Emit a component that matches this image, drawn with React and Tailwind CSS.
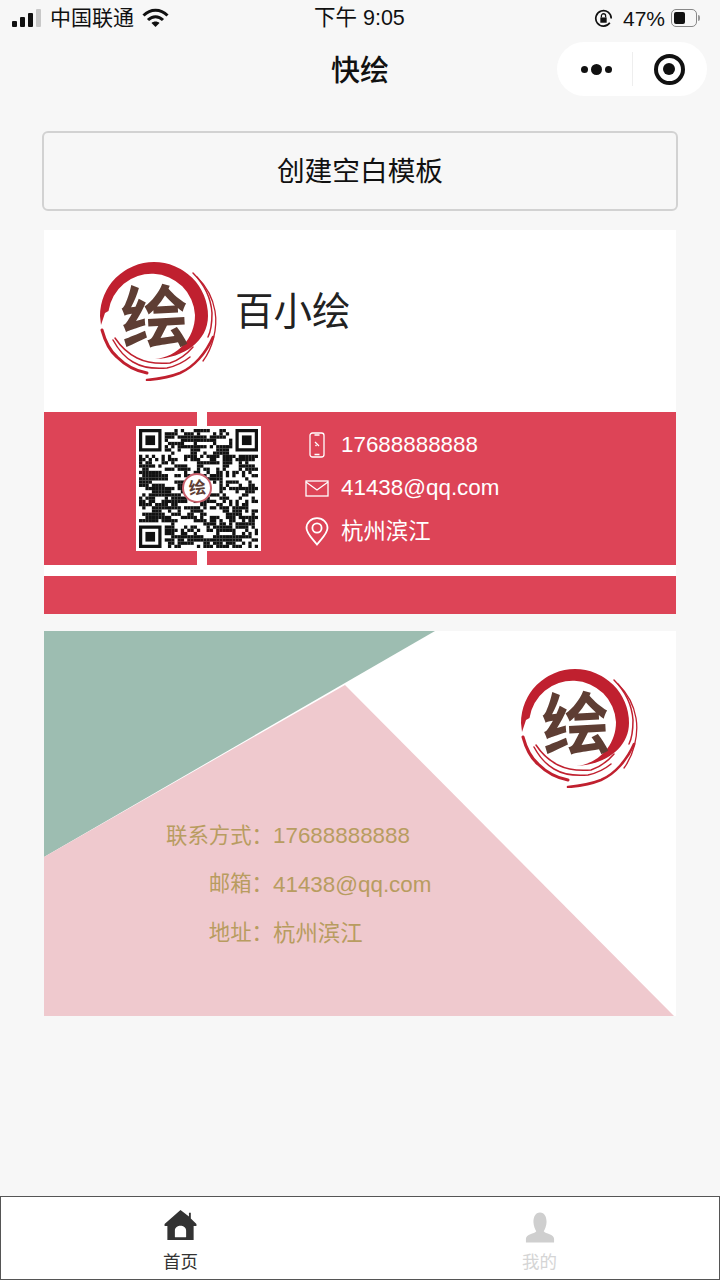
const FONT = "font-['Liberation_Sans','Noto_Sans_CJK_SC',sans-serif]";

// the logo: ink brush ring with the character on top
function Logo() {
    return (
        <div className="relative w-[120px] h-[120px] shrink-0">
            <svg viewBox="0 0 120 120" className="w-full h-full" fill="none" stroke="#c0202f" strokeLinecap="round">
                <path stroke="none" fill="#c0202f" d="M2 64 L1 55 A54 54 0 0 1 109 55 C109 80 85 97 56 98 C78 96 96 78 96 54 A43.5 43.5 0 0 0 9.5 50 L6 52 Z" />
                <path strokeWidth="1.3" d="M98 16 C108 26 114 38 116 50 C119 68 113 88 104 100" />
                <path strokeWidth="1.5" d="M94 12 C106 24 112 38 113 52 C113 62 112 70 109 76" />
                <path strokeWidth="3" d="M3 69 C6 80 11 90 18 96 C27 105 37 110 48 112" />
                <path strokeWidth="1.5" d="M14 79 C20 90 27 97 34 101 C44 107 57 108 68 107 C77 105 85 101 91 96" />
                <path strokeWidth="1.5" d="M16 77 C22 86 30 93 38 97 C48 102 60 103 71 102 C80 99 88 93 94 86" />
                <path strokeWidth="2.6" d="M48 119 C60 118 71 116 81 112 C95 106 107 92 114 76" />
            </svg>
            <span className={`${FONT} absolute inset-0 flex items-center justify-center pr-[8px] pb-[6px] text-[68px] font-bold text-[#5e3d33] leading-none -rotate-3`}>绘</span>
        </div>
    );
}

function QrCode() {
    const size = 37;
    const cells = [];
    let seed = 20240905;
    const next = () => {
        seed = (seed * 1103515245 + 12345) & 0x7fffffff;
        return (seed >> 16) % 100;
    };
    const inFinder = (x, y) => (x < 8 && y < 8) || (x >= size - 8 && y < 8) || (x < 8 && y >= size - 8);
    for (let y = 0; y < size; y++) {
        let prev = false;
        for (let x = 0; x < size; x++) {
            // neighbours lean the same way, so the modules clump like the real code
            const on = next() < (prev ? 66 : 44);
            prev = on;
            if (on && !inFinder(x, y)) {
                cells.push(<rect key={`${x}-${y}`} x={x} y={y} width="1.02" height="1.02" />);
            }
        }
    }
    const finders = [[0, 0], [size - 7, 0], [0, size - 7]];
    return (
        <div className="relative w-[125px] h-[125px] bg-white p-[3px] shrink-0">
            <svg viewBox="0 0 37 37" className="w-full h-full" fill="#111">
                {cells}
                {finders.map(([x, y]) => (
                    <g key={`${x}-${y}`}>
                        <path fillRule="evenodd" d={`M${x} ${y}h7v7h-7z M${x + 1} ${y + 1}v5h5v-5z`} />
                        <rect x={x + 2} y={y + 2} width="3" height="3" />
                    </g>
                ))}
            </svg>
            <div className="absolute left-[46px] top-[47px] w-[30px] h-[30px] rounded-full bg-white border-[2px] border-[#c9606c] flex items-center justify-center">
                <span className={`${FONT} text-[17px] font-bold leading-none text-[#5e3d33] -rotate-6`}>绘</span>
            </div>
        </div>
    );
}

function PhoneIcon() {
    return (
        <svg width="16" height="26" viewBox="0 0 16 26" fill="none" stroke="#fff" strokeWidth="1.3">
            <rect x="1" y="1" width="14" height="24" rx="2.5" />
            <path d="M5.5 3h5M5.5 22.5h5M6 10l4 4M6.5 13l1 1" />
        </svg>
    );
}

function MailIcon() {
    return (
        <svg width="24" height="17" viewBox="0 0 24 17" fill="none" stroke="#fff" strokeWidth="1.3">
            <rect x="1" y="1" width="22" height="15" />
            <path d="M1 2l11 8 11-8" />
        </svg>
    );
}

function PinIcon() {
    return (
        <svg width="24" height="29" viewBox="0 0 24 29" fill="none" stroke="#fff" strokeWidth="1.8">
            <path d="M12 27.5 C7 21 1.5 16.5 1.5 11 C1.5 5.5 6 1.2 12 1.2 C18 1.2 22.5 5.5 22.5 11 C22.5 16.5 17 21 12 27.5 Z" />
            <circle cx="12" cy="11" r="4.6" />
        </svg>
    );
}

function StatusBar() {
    return (
        <div className={`${FONT} h-[36px] relative flex items-center justify-between pl-[12px] pr-[20px] text-[#111]`}>
            <div className="flex items-center">
                <svg width="30" height="20" viewBox="0 0 30 20" fill="#111">
                    <rect x="0" y="13" width="5" height="6" rx="1" />
                    <rect x="8" y="9" width="5" height="10" rx="1" />
                    <rect x="16" y="5" width="5" height="14" rx="1" />
                    <rect x="24" y="1" width="5" height="18" rx="1" fill="#c8c8c8" />
                </svg>
                <span className="ml-[8px] mt-[-2px] text-[21px] leading-none">中国联通</span>
                <svg className="ml-[8px]" width="27" height="20" viewBox="0 0 27 20" fill="none" stroke="#111" strokeWidth="3">
                    <path d="M1.5 7.5 C8.5 0.5 18.5 0.5 25.5 7.5" />
                    <path d="M6 12 C10.5 7.5 16.5 7.5 21 12" />
                    <path d="M13.5 19 L9.5 15 C11.5 13 15.5 13 17.5 15 Z" fill="#111" stroke="none" />
                </svg>
            </div>
            <span className="absolute left-[314px] top-[6px] text-[21.5px] leading-[24px]">下午 9:05</span>
            <div className="flex items-center">
                <svg width="19" height="19" viewBox="0 0 18 18" fill="none" stroke="#111" strokeWidth="1.6">
                    <path d="M15 13 A7.3 7.3 0 1 1 16.3 9" />
                    <rect x="6" y="8" width="6" height="5" fill="#111" stroke="none" />
                    <path d="M7 8V6.5a2 2 0 0 1 4 0V8" strokeWidth="1.2" />
                </svg>
                <span className="ml-[10px] text-[21px] leading-none">47%</span>
                <div className="ml-[6px] w-[26px] h-[18px] rounded-[5px] border border-[#888] p-[2px]">
                    <div className="w-[11px] h-full rounded-[2px] bg-[#111]"></div>
                </div>
                <div className="w-[2px] h-[6px] bg-[#999] ml-[1px] rounded-r"></div>
            </div>
        </div>
    );
}

function NavBar() {
    return (
        <div className="h-[74px] relative flex items-center justify-center pb-[4px]">
            <span className={`${FONT} text-[29px] font-medium text-[#111] leading-none`}>快绘</span>
            <div className="absolute left-[557px] top-[6px] w-[150px] h-[54px] rounded-full bg-white flex items-center">
                <div className="w-[75px] flex items-center justify-center gap-[3px] pl-[4px]">
                    <span className="w-[7px] h-[7px] rounded-full bg-[#111]"></span>
                    <span className="w-[11px] h-[11px] rounded-full bg-[#111]"></span>
                    <span className="w-[7px] h-[7px] rounded-full bg-[#111]"></span>
                </div>
                <div className="w-px h-[34px] bg-[#eeeeee]"></div>
                <div className="flex-1 flex items-center justify-center pr-[2px]">
                    <div className="w-[31px] h-[31px] rounded-full border-[4px] border-[#111] flex items-center justify-center">
                        <span className="w-[12px] h-[12px] rounded-full bg-[#111]"></span>
                    </div>
                </div>
            </div>
        </div>
    );
}

function ContactRow({ icon, children }) {
    return (
        <div className="h-[43.5px] flex items-center">
            <div className="w-[24px] flex justify-center">{icon}</div>
            <span className="ml-[12px] text-[22.4px] text-white leading-none">{children}</span>
        </div>
    );
}

function CardOne() {
    return (
        <div className="mx-[2px] mt-[19px] bg-white">
            <div className="h-[182px] flex items-start pl-[55px] pt-[31px]">
                <Logo />
                <span className={`${FONT} ml-[16px] mt-[3px] text-[38.5px] leading-[96px] text-[#222]`}>百小绘</span>
            </div>
            <div className="relative h-[153px] bg-[#dd4457] flex pl-[92px] pt-[14px]">
                <div className="absolute left-[153px] top-0 bottom-0 w-[10px] bg-white"></div>
                <div className="relative"><QrCode /></div>
                <div className="relative ml-[44px] mt-[-3px]">
                    <ContactRow icon={<PhoneIcon />}>17688888888</ContactRow>
                    <ContactRow icon={<MailIcon />}>41438@qq.com</ContactRow>
                    <ContactRow icon={<PinIcon />}>杭州滨江</ContactRow>
                </div>
            </div>
            <div className="mt-[11px] h-[38px] bg-[#dd4457]"></div>
        </div>
    );
}

function InfoRow({ label, value }) {
    return (
        <div className="h-[48.7px] flex items-center text-[22.4px] text-[#b89c60]">
            <span className="w-[229px] text-right text-[21.4px] leading-none">{label}：</span>
            <span className="leading-none">{value}</span>
        </div>
    );
}

function CardTwo() {
    return (
        <div className="relative mx-[2px] mt-[17px] h-[385px] bg-white">
            <svg className="absolute inset-0 w-full h-full" viewBox="0 0 632 385">
                <polygon points="0,0 391,0 0,226" fill="#9dbdb1" />
                <polygon points="301,54 630,385 0,385 0,226" fill="#efc9ce" />
            </svg>
            <div className="relative">
                <div className="flex justify-end pr-[36px] pt-[37px]">
                    <Logo />
                </div>
                <div className="mt-[24px]">
                    <InfoRow label="联系方式" value="17688888888" />
                    <InfoRow label="邮箱" value="41438@qq.com" />
                    <InfoRow label="地址" value="杭州滨江" />
                </div>
            </div>
        </div>
    );
}

function TabBar() {
    return (
        <div className={`${FONT} h-[84px] bg-white border border-[#555] grid grid-cols-2`}>
            <div className="flex flex-col items-center pt-[13px]">
                <svg width="33" height="30" viewBox="0 0 34 32" fill="#333">
                    <path fillRule="evenodd" d="M17 0 L26 7 V3 H28 V9 L34 15 V17 H31 V32 H3 V17 H0 V15 Z M11 29 H23 V22 C23 15 11 15 11 22 Z" />
                </svg>
                <span className="mt-[10px] text-[17.5px] leading-[24px] text-[#333]">首页</span>
            </div>
            <div className="flex flex-col items-center pt-[15px]">
                <svg width="30" height="31" viewBox="0 0 32 32" fill="#cfcfcf">
                    <path d="M16 0 C21 0 23 5 23 10 C23 14 21 18 20 20 C22 23 31 23 31 28 V32 H1 V28 C1 23 10 23 12 20 C11 18 9 14 9 10 C9 5 11 0 16 0 Z" />
                </svg>
                <span className="mt-[7px] text-[17.5px] leading-[24px] text-[#d5d5d5]">我的</span>
            </div>
        </div>
    );
}

export default function App() {
    return (
        <div className={`${FONT} w-[720px] h-[1280px] bg-[#f7f7f7] flex flex-col overflow-hidden`}>
            <StatusBar />
            <NavBar />
            <main className="flex-1 px-[42px] pt-[21px]">
                <div className="h-[80px] rounded-[6px] border-2 border-[#d2d2d2] flex items-center justify-center pt-[2px] text-[27.7px] text-[#111]">
                    创建空白模板
                </div>
                <CardOne />
                <CardTwo />
            </main>
            <TabBar />
        </div>
    );
}
